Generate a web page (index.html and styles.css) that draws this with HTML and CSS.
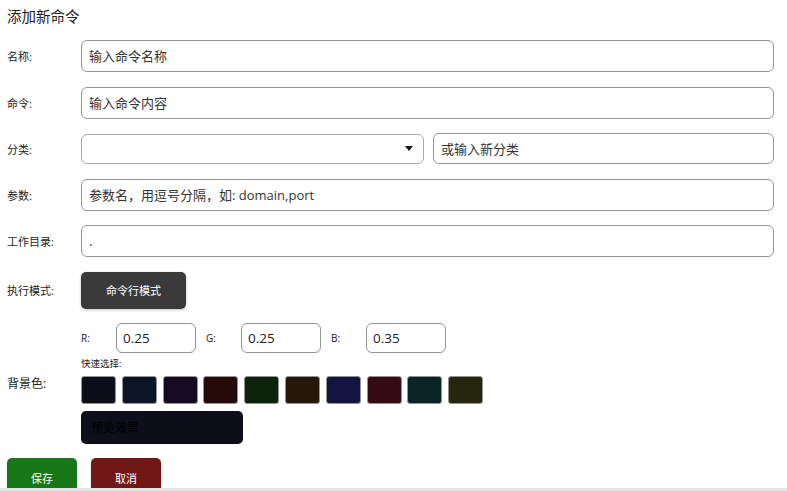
FILE: index.html
```html
<!DOCTYPE html>
<html lang="zh">
<head>
<meta charset="utf-8">
<title>添加新命令</title>
<link rel="stylesheet" href="styles.css">
</head>
<body>
<div class="page">
  <h1 class="title">添加新命令</h1>
  <div class="form">
    <div class="row">
      <label class="label">名称:</label>
      <input class="field" type="text" placeholder="输入命令名称">
    </div>
    <div class="row">
      <label class="label">命令:</label>
      <input class="field" type="text" placeholder="输入命令内容">
    </div>
    <div class="row">
      <label class="label">分类:</label>
      <div class="select"><span class="arrow"></span></div>
      <input class="field field-cat" type="text" placeholder="或输入新分类">
    </div>
    <div class="row">
      <label class="label">参数:</label>
      <input class="field" type="text" placeholder="参数名，用逗号分隔，如: domain,port">
    </div>
    <div class="row">
      <label class="label">工作目录:</label>
      <input class="field" type="text" value=".">
    </div>
    <div class="row row-mode">
      <label class="label">执行模式:</label>
      <button class="mode-btn">命令行模式</button>
    </div>
    <div class="row row-bg">
      <label class="label label-bg">背景色:</label>
      <div class="bg-col">
        <div class="rgb">
          <span class="rgb-label">R:</span><input class="num" type="text" value="0.25">
          <span class="rgb-label">G:</span><input class="num" type="text" value="0.25">
          <span class="rgb-label">B:</span><input class="num" type="text" value="0.35">
        </div>
        <div class="quick">快速选择:</div>
        <div class="swatches">
          <span class="sw" style="background:#0e0e1a"></span>
          <span class="sw" style="background:#0b1526"></span>
          <span class="sw" style="background:#140a24"></span>
          <span class="sw" style="background:#260a0a"></span>
          <span class="sw" style="background:#0b220b"></span>
          <span class="sw" style="background:#26170b"></span>
          <span class="sw" style="background:#141440"></span>
          <span class="sw" style="background:#360a14"></span>
          <span class="sw" style="background:#0b2426"></span>
          <span class="sw" style="background:#26260e"></span>
        </div>
        <div class="preview">预览效果</div>
      </div>
    </div>
    <div class="actions">
      <button class="btn btn-save">保存</button>
      <button class="btn btn-cancel">取消</button>
    </div>
  </div>
</div>
<div class="bottom-bar"></div>
</body>
</html>
```
FILE: styles.css
```css
* { box-sizing: border-box; }
html, body { margin: 0; padding: 0; background: #fff; }
body {
  font-family: "Open Sans", "Noto Sans CJK SC", sans-serif;
  color: #222;
  width: 787px;
  height: 491px;
  overflow: hidden;
}
.page { padding: 7px 13px 0 7px; }
.title {
  margin: 0 0 13px 0;
  font-size: 14.5px;
  font-weight: normal;
  line-height: 20px;
  color: #222;
}
.form { display: flex; flex-direction: column; }
.row {
  display: flex;
  align-items: center;
  margin-bottom: 14.5px;
}
.label {
  width: 74px;
  flex: none;
  font-size: 11px;
  color: #222;
}
.field {
  flex: 1;
  height: 32px;
  border: 1.5px solid #949494;
  border-radius: 6px;
  padding: 0 7px;
  font-family: "Open Sans", "Noto Sans CJK SC", sans-serif;
  font-size: 13px;
  color: #333;
  background: #fff;
  outline: none;
}
.field::placeholder { color: #333; }
.select {
  width: 343px;
  flex: none;
  height: 30px;
  border: 1.5px solid #a8a8a8;
  border-radius: 6px;
  display: flex;
  align-items: center;
  justify-content: flex-end;
  padding-right: 10px;
  margin-right: 9px;
}
.arrow {
  width: 0; height: 0;
  border-left: 4px solid transparent;
  border-right: 4px solid transparent;
  border-top: 5px solid #111;
}
.field-cat { height: 31px; }
.row-mode { margin-bottom: 14px; }
.mode-btn {
  width: 105px;
  height: 37px;
  border: none;
  border-radius: 5px;
  background: #3a3a3a;
  color: #fff;
  font-family: "Open Sans", "Noto Sans CJK SC", sans-serif;
  font-size: 11px;
  box-shadow: 0 1px 3px rgba(0,0,0,0.25);
}
.label-bg { font-size: 12px; }
.bg-col { display: flex; flex-direction: column; }
.rgb { display: flex; align-items: center; }
.rgb-label { width: 35px; font-size: 10px; color: #222; }
.num {
  width: 80px;
  height: 30px;
  margin-right: 10px;
  border: 1.5px solid #949494;
  border-radius: 6px;
  padding: 0 6px;
  font-family: "Open Sans", "Noto Sans CJK SC", sans-serif;
  font-size: 13.5px;
  color: #222;
  outline: none;
}
.quick {
  font-size: 9.5px;
  line-height: 12px;
  margin: 5px 0 6px 0;
  color: #222;
}
.swatches { display: flex; gap: 5.8px; }
.sw {
  width: 35px;
  height: 28px;
  border: 1.5px solid #949494;
  border-radius: 3px;
  display: block;
}
.preview {
  margin-top: 7px;
  width: 162px;
  height: 33px;
  border-radius: 5px;
  background: #0e0e1a;
  color: #000;
  font-size: 12px;
  display: flex;
  align-items: center;
  padding-left: 10px;
}
.actions { display: flex; gap: 14px; }
.btn {
  width: 70px;
  height: 36px;
  border: none;
  border-radius: 5px;
  color: #fff;
  font-family: "Open Sans", "Noto Sans CJK SC", sans-serif;
  font-size: 11px;
  padding-top: 4px;
  box-shadow: 0 1px 2px rgba(0,0,0,0.2);
}
.btn-save { background: #187818; }
.btn-cancel { background: #731616; }
.bottom-bar {
  position: fixed;
  left: 0; right: 0; bottom: 0;
  height: 3px;
  background: #e4e4e4;
}
```
